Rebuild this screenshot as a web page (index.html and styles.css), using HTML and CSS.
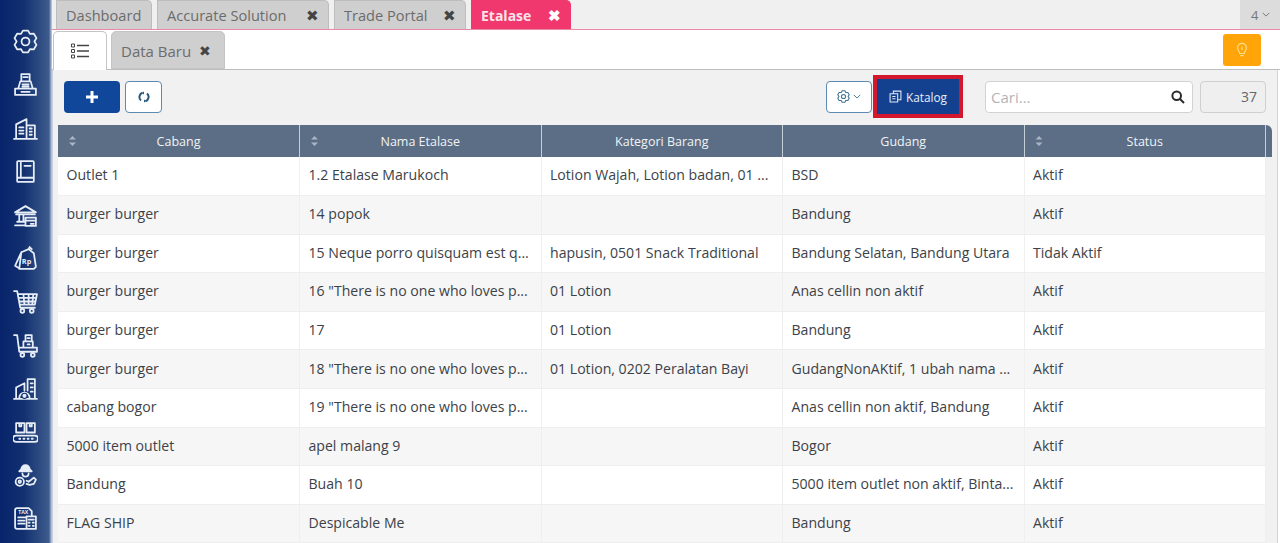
FILE: index.html
```html
<!DOCTYPE html>
<html lang="en">
<head>
  <meta charset="UTF-8">
  <title>Etalase</title>
  <link rel="stylesheet" href="styles.css">
</head>
<body>
  <aside class="sidebar">
    <!-- settings -->
    <svg class="nav-icon" viewBox="0 0 24 24"><path d="M14.500 1.500h-5l-1.750 3.140-3.790-.14-2.480 4.280 2.020 3.220-2.020 3.220 2.480 4.280 3.790-.14 1.750 3.140h5l1.750-3.140 3.790.14 2.480-4.280-2.020-3.220 2.020-3.220-2.480-4.280-3.790.14z"/><circle cx="12" cy="12" r="3.800"/></svg>
    <!-- register -->
    <svg class="nav-icon" viewBox="0 0 24 24"><path d="M8 9V2h8v7M10 5h4M5 16l2-7h10l2 7M2 16h20v6H2zM9 12h6M9 14h6M8 19h8"/></svg>
    <!-- buildings -->
    <svg class="nav-icon" viewBox="0 0 24 24"><path d="M3 22V8l10-5v19M13 9h8v13M1 22h22M6 11h4M6 14h4M6 17h4M16 12h2M16 15h2M16 18h2"/></svg>
    <!-- book -->
    <svg class="nav-icon" viewBox="0 0 24 24"><path d="M5 2h14a1 1 0 011 1v18a1 1 0 01-1 1H5a1 1 0 01-1-1V3a1 1 0 011-1zM4 18h16M7.500 2v16M11 6.500h6"/></svg>
    <!-- bank -->
    <svg class="nav-icon" viewBox="0 0 24 24"><path d="M2 9l10-6 10 6zM3 11h18M6 11v7M10 11v7M2 21.500h9M4 18h7M12 14h10v8H12zM12 17h10M17 20h3"/></svg>
    <!-- bag -->
    <svg class="nav-icon" viewBox="0 0 24 24"><path d="M8 6l7-3 5 4 2 13-2 2H7l-5-3zM8 6l-2 16M15 3l1-2 2 2"/><text class="nav-rp" x="8.500" y="17.500">Rp</text></svg>
    <!-- cart -->
    <svg class="nav-icon" viewBox="0 0 24 24"><path d="M1 2h3l3 16h14M5 5h18l-2 10H7M10 5l1 10M15 5v10M19.500 5l-1 10M6 8.500h16M6.500 12h15"/><circle cx="9" cy="21" r="1.800"/><circle cx="18" cy="21" r="1.800"/></svg>
    <!-- trolley -->
    <svg class="nav-icon" viewBox="0 0 24 24"><path d="M1 2h3l2 16h17v-4H6M10 8h9v6h-9zM12 2h6v6h-6zM14 5h2M14 11h2"/><circle cx="9" cy="21" r="1.800"/><circle cx="19" cy="21" r="1.800"/></svg>
    <!-- factory -->
    <svg class="nav-icon" viewBox="0 0 24 24"><path d="M1 22h22M3 22V11l8-4v7M14 14V3h7v19M17 7h2M17 11h2M17 15h2M6 21a5 5 0 0110 0"/><circle class="solid" cx="11" cy="19" r="2.500"/></svg>
    <!-- conveyor -->
    <svg class="nav-icon" viewBox="0 0 24 24"><path d="M3 3h8v9H3zM13 3h8v9h-8zM6 3v3h2V3M16 3v3h2V3M3 15h18a3 3 0 010 6H3a3 3 0 010-6zM6 18h1M10 18h1M14 18h1M18 18h1"/></svg>
    <!-- worker -->
    <svg class="nav-icon" viewBox="0 0 24 24"><path class="hat" d="M8 6a4 4 0 018 0l2 2H6z"/><path d="M9 10a3 3 0 006 0M13 17l2 1 5-4 2 2-2 4-4 1-3-1"/><circle cx="6.500" cy="18" r="4"/><circle cx="6.500" cy="18" r="1.200"/></svg>
    <!-- tax -->
    <svg class="nav-icon" viewBox="0 0 24 24"><path d="M12 22H4a2 2 0 01-2-2V4a2 2 0 012-2h11l3 3v4M5 11h7M5 14h6M5 17h6M13 10h9v12h-9zM15 13h5M15 16h1M19 16h1M15 19h1M19 19h1"/><text class="nav-tax" x="5" y="8">TAX</text></svg>
  </aside>

  <main class="content">
    <nav class="tabbar">
      <div class="tab">Dashboard</div>
      <div class="tab tab-accurate">Accurate Solution <span class="tab-x">&#10006;</span></div>
      <div class="tab tab-trade">Trade Portal <span class="tab-x">&#10006;</span></div>
      <div class="tab tab-active">Etalase <span class="tab-x">&#10006;</span></div>
      <div class="tab-count">4 <svg class="chev" viewBox="0 0 10 6"><path d="M1 1l4 4 4-4"/></svg></div>
    </nav>

    <div class="subbar">
      <div class="subtab subtab-list">
        <svg class="list-icon" viewBox="0 0 18 16"><path d="M6 2.500h12M6 8h12M6 13.500h12"/><path class="thin" d="M.500 1h3v3h-3zM.500 6.500h3v3h-3zM.500 12h3v3h-3z"/></svg>
      </div>
      <div class="subtab subtab-new">Data Baru <span class="subtab-x">&#10006;</span></div>
      <button class="tip-btn">
        <svg class="bulb" viewBox="0 0 16 18"><path d="M5.500 13c0-2-2.500-3-2.500-6.500a5 5 0 0110 0C13 10 10.500 11 10.500 13zM6 15.500h4M8 5v4"/></svg>
      </button>
    </div>

    <section class="panel">
      <div class="toolbar">
        <button class="btn-add">
          <svg class="plus" viewBox="0 0 14 14"><path d="M7 1v12M1 7h12"/></svg>
        </button>
        <button class="btn-refresh">
          <svg class="refresh" viewBox="0 0 12 12"><path d="M3 9.500A4.500 4.500 0 014.500 1.800M9 2.500a4.500 4.500 0 01-1.500 7.700"/><path class="tip" d="M6 .500v3L3.800 2zM6 11.500v-3L8.200 10z"/></svg>
        </button>
        <div class="spacer"></div>
        <button class="btn-config">
          <svg class="gear" viewBox="0 0 24 24"><path d="M14.500 1.500h-5l-1.750 3.140-3.790-.14-2.480 4.280 2.020 3.220-2.020 3.220 2.480 4.280 3.790-.14 1.750 3.140h5l1.750-3.140 3.790.14 2.480-4.280-2.020-3.220 2.020-3.220-2.480-4.280-3.790.14z"/><circle cx="12" cy="12" r="3.800"/></svg>
          <svg class="chev chev-blue" viewBox="0 0 10 6"><path d="M1 1l4 4 4-4"/></svg>
        </button>
        <div class="katalog-mark">
          <button class="btn-katalog">
            <svg class="copy" viewBox="0 0 12 12"><path d="M4 3V1h7v8H8M1 3.500h7V11H1zM3 6h3M3 8h3"/></svg>
            Katalog
          </button>
        </div>
        <div class="search">
          <span class="search-text">Cari...</span>
          <svg class="search-icon" viewBox="0 0 14 14"><circle cx="5.700" cy="5.700" r="4.300"/><path d="M9 9l4 4"/></svg>
        </div>
        <div class="total">37</div>
      </div>

      <div class="table-wrap">
        <table class="grid">
          <thead>
            <tr>
              <th><span class="sort"></span>Cabang</th>
              <th><span class="sort"></span>Nama Etalase</th>
              <th>Kategori Barang</th>
              <th>Gudang</th>
              <th><span class="sort"></span>Status</th>
            </tr>
          </thead>
          <tbody>
            <tr><td>Outlet 1</td><td>1.2 Etalase Marukoch</td><td>Lotion Wajah, Lotion badan, 01 ...</td><td>BSD</td><td>Aktif</td></tr>
            <tr><td>burger burger</td><td>14 popok</td><td></td><td>Bandung</td><td>Aktif</td></tr>
            <tr><td>burger burger</td><td>15 Neque porro quisquam est q...</td><td>hapusin, 0501 Snack Traditional</td><td>Bandung Selatan, Bandung Utara</td><td>Tidak Aktif</td></tr>
            <tr><td>burger burger</td><td>16 "There is no one who loves p...</td><td>01 Lotion</td><td>Anas cellin non aktif</td><td>Aktif</td></tr>
            <tr><td>burger burger</td><td>17</td><td>01 Lotion</td><td>Bandung</td><td>Aktif</td></tr>
            <tr><td>burger burger</td><td>18 "There is no one who loves p...</td><td>01 Lotion, 0202 Peralatan Bayi</td><td>GudangNonAKtif, 1 ubah nama ...</td><td>Aktif</td></tr>
            <tr><td>cabang bogor</td><td>19 "There is no one who loves p...</td><td></td><td>Anas cellin non aktif, Bandung</td><td>Aktif</td></tr>
            <tr><td>5000 item outlet</td><td>apel malang 9</td><td></td><td>Bogor</td><td>Aktif</td></tr>
            <tr><td>Bandung</td><td>Buah 10</td><td></td><td>5000 item outlet non aktif, Binta...</td><td>Aktif</td></tr>
            <tr><td>FLAG SHIP</td><td>Despicable Me</td><td></td><td>Bandung</td><td>Aktif</td></tr>
          </tbody>
        </table>
      </div>
    </section>
  </main>
</body>
</html>
```

FILE: styles.css
```css
*{
  box-sizing: border-box;
}
html,body{
  height: 100%;
}
body{
  margin: 0;
  display: flex;
  overflow: hidden;
  background: #fff;
  color: #3c4248;
  font-family: "Open Sans", "Liberation Sans", sans-serif;
  font-size: 14px;
}
button{
  font-family: inherit;
  padding: 0;
  display: flex;
  align-items: center;
  justify-content: center;
}

/* sidebar */
.sidebar{
  width: 52px;
  flex: none;
  padding: 29px 2px 0 0;
  display: flex;
  flex-direction: column;
  align-items: center;
  gap: 18.400px;
  background: linear-gradient(90deg, #08246c 0%, #12306f 45%, #3d5b8c 94%, #c9d3e0 100%);
}
.nav-icon{
  width: 25px;
  height: 25px;
  flex: none;
  fill: none;
  stroke: #e6edf6;
  stroke-width: 1.700;
  stroke-linejoin: round;
  stroke-linecap: round;
}
.nav-icon .solid{
  fill: #e6edf6;
  stroke: #12306f;
  stroke-width: 1;
}
.nav-icon .hat{
  fill: #e6edf6;
}
.nav-rp,.nav-tax{
  fill: #e6edf6;
  stroke: none;
  font-weight: 700;
}
.nav-rp{
  font-size: 7px;
}
.nav-tax{
  font-size: 5px;
}

.content{
  flex: 1;
  min-width: 0;
  display: flex;
  flex-direction: column;
}

/* top tabs */
.tabbar{
  height: 30px;
  flex: none;
  display: flex;
  gap: 5px;
  padding-left: 4px;
  background: #f0f0f0;
  border-bottom: 1px solid #e88aa5;
}
.tab{
  width: 96px;
  height: 29px;
  padding-left: 9px;
  display: flex;
  align-items: center;
  font-size: 14.600px;
  color: #6c6c6c;
  background: #cfcfcf;
  border: 1px solid #bdbdbd;
  border-bottom: 0;
  border-radius: 0 5px 0 0;
}
.tab-accurate{
  width: 172px;
}
.tab-trade{
  width: 132px;
}
.tab-x{
  margin-left: auto;
  margin-right: 9px;
  font-size: 15px;
  color: #444;
}
.tab-active{
  width: 100px;
  font-size: 14px;
  font-weight: 700;
  color: #fbe3ea;
  background: #f0386f;
  border-color: #f0386f;
}
.tab-active .tab-x{
  color: #fff;
}
.tab-count{
  margin-left: auto;
  width: 40px;
  height: 29px;
  display: flex;
  align-items: center;
  gap: 4px;
  padding-left: 11px;
  font-size: 13px;
  color: #777;
  background: #dcdcdc;
}
.chev{
  width: 8px;
  height: 5px;
  fill: none;
  stroke: #777;
  stroke-width: 1.200;
}
.chev-blue{
  stroke: #3f7396;
}

/* second row of tabs */
.subbar{
  height: 40px;
  flex: none;
  display: flex;
  align-items: flex-end;
  gap: 4px;
  padding: 0 19px 0 1px;
  background: #fff;
  border-bottom: 1px solid #bdbdbd;
}
.subtab{
  height: 38px;
  display: flex;
  align-items: center;
  border: 1px solid #c4c4c4;
  border-radius: 5px 5px 0 0;
}
.subtab-list{
  width: 54px;
  height: 39px;
  margin-bottom: -1px;
  justify-content: center;
  background: #fff;
  border-bottom: 0;
}
.list-icon{
  width: 18px;
  height: 16px;
  fill: none;
  stroke: #444;
  stroke-width: 1.500;
}
.list-icon .thin{
  stroke-width: 1;
}
.subtab-new{
  width: 114px;
  padding: 1px 0 0 9px;
  font-size: 15px;
  color: #6c6c6c;
  background: #cfcfcf;
}
.subtab-x{
  margin-left: 8px;
  font-size: 14px;
  color: #444;
}
.tip-btn{
  margin: 0 0 3px auto;
  width: 38px;
  height: 32px;
  background: #ffa50a;
  border: 0;
  border-radius: 3px;
}
.bulb{
  width: 14px;
  height: 16px;
  fill: none;
  stroke: #ffe28a;
  stroke-width: 1.300;
}

/* toolbar + table */
.panel{
  flex: 1;
  min-height: 0;
  margin-right: 2px;
  padding: 0 0 0 5px;
  background: #f1f1f1;
  border-left: 1px solid #c5d0e4;
  border-right: 1px solid #d4d4d4;
  overflow: hidden;
}
.toolbar{
  height: 55px;
  display: flex;
  align-items: center;
  padding: 0 11px 2px 6px;
}
.btn-add{
  width: 56px;
  height: 32px;
  background: #11479b;
  border: 0;
  border-radius: 4px;
}
.plus{
  width: 14px;
  height: 14px;
  stroke: #fff;
  stroke-width: 3;
}
.btn-refresh{
  width: 37px;
  height: 32px;
  margin-left: 5px;
  background: #fff;
  border: 1px solid #5c8ab0;
  border-radius: 4px;
}
.refresh{
  width: 12px;
  height: 12px;
  fill: none;
  stroke: #28597f;
  stroke-width: 2;
}
.refresh .tip{
  fill: #28597f;
  stroke: none;
}
.spacer{
  flex: 1;
}
.btn-config{
  width: 46px;
  height: 32px;
  gap: 3px;
  background: #fff;
  border: 1px solid #5c8ab0;
  border-radius: 4px;
}
.gear{
  width: 13px;
  height: 13px;
  fill: none;
  stroke: #3f7396;
  stroke-width: 2;
}
.katalog-mark{
  width: 90px;
  height: 43px;
  margin-left: 1px;
  padding: 4px 4px;
  background: #d3172c;
}
.btn-katalog{
  width: 100%;
  height: 100%;
  gap: 4px;
  font-size: 11.800px;
  font-weight: 500;
  color: #e8eef8;
  background: #14418f;
  border: 0;
}
.copy{
  width: 13px;
  height: 13px;
  fill: none;
  stroke: #dfe8f6;
  stroke-width: 1;
}
.search{
  width: 208px;
  height: 32px;
  margin-left: 22px;
  padding: 0 7px 0 5px;
  display: flex;
  align-items: center;
  justify-content: space-between;
  background: #fff;
  border: 1px solid #d2d2d2;
  border-radius: 4px;
}
.search-text{
  font-size: 15px;
  color: #b4b4b4;
}
.search-icon{
  width: 14px;
  height: 14px;
  fill: none;
  stroke: #2a2a2a;
  stroke-width: 2;
}
.total{
  width: 66px;
  height: 32px;
  margin-left: 7px;
  padding-right: 8px;
  display: flex;
  align-items: center;
  justify-content: flex-end;
  font-size: 14px;
  color: #666;
  background: #efefef;
  border: 1px solid #cfcfcf;
  border-radius: 4px;
}
.table-wrap{
  width: 1214px;
  background: linear-gradient(#5b6e85, #5b6e85) no-repeat top / 100% 32px;
  border-radius: 4px 6px 0 0;
}
.grid{
  width: 1208px;
  table-layout: fixed;
  border-collapse: collapse;
}
.grid th{
  position: relative;
  height: 32px;
  padding: 0 9px;
  font-size: 12.500px;
  font-weight: 400;
  text-align: center;
  color: #f0f3f6;
  background: #5b6e85;
  border-right: 1px solid #c6ced8;
}
.sort{
  position: absolute;
  left: 11px;
  top: 11px;
  width: 7px;
  height: 10px;
  background: #a9b5c3;
  clip-path: polygon(50% 0, 100% 35%, 0 35%, 0 65%, 100% 65%, 50% 100%, 0 65%, 0 35%);
}
.grid td{
  height: 38.600px;
  padding: 0 6px 2.500px 8.500px;
  font-size: 14.100px;
  white-space: nowrap;
  overflow: hidden;
  color: #3c4248;
  background: #fff;
  border-right: 1px solid #efefef;
  border-bottom: 1px solid #eeeeee;
}
.grid tbody tr:nth-child(even) td{
  background: #f6f6f6;
}
```
